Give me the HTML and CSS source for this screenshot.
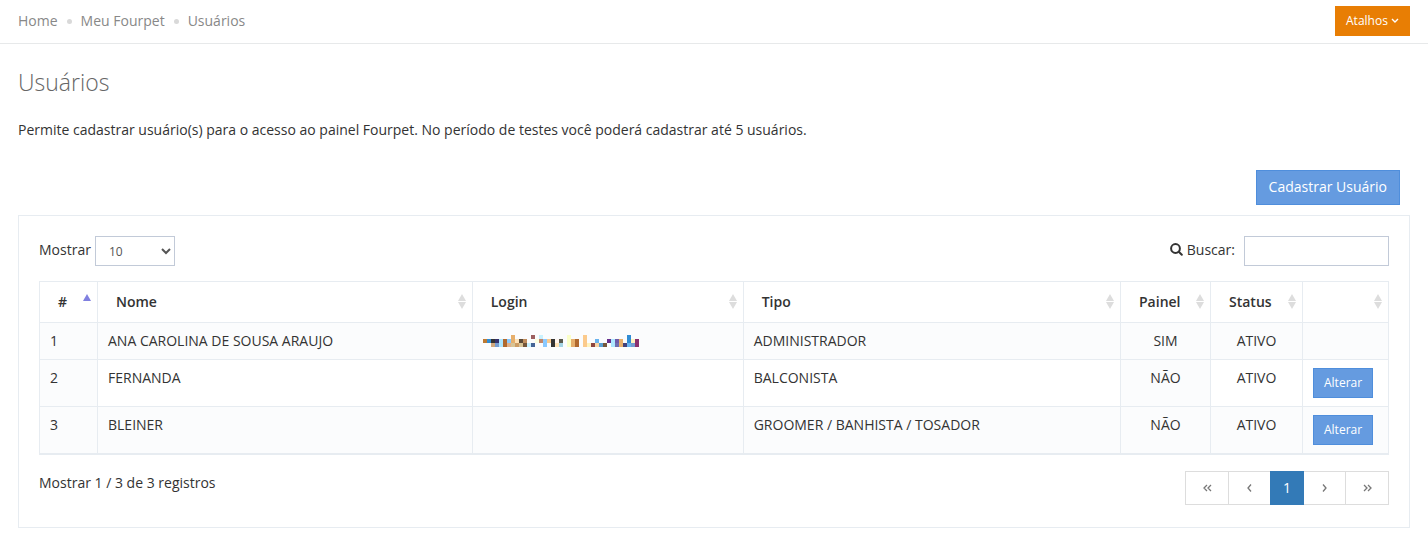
FILE: index.html
```html
<!DOCTYPE html>
<html lang="pt-BR">

<head>
    <meta charset="UTF-8" />
    <meta name="viewport" content="width=device-width, initial-scale=1.0" />
    <title>Usuários</title>
    <link rel="stylesheet" href="styles.css">
</head>

<body>
    <header class="page-bar">
        <nav class="breadcrumb">
            <a href="#">Home</a>
            <i class="dot"></i>
            <a href="#">Meu Fourpet</a>
            <i class="dot"></i>
            <span>Usuários</span>
        </nav>
        <button type="button" class="btn btn-sm btn-orange">Atalhos
            <svg class="caret" width="8" height="6" viewBox="0 0 8 6"><path d="M1 1l3 3 3-3" /></svg>
        </button>
    </header>

    <main class="page-content">
        <h1 class="page-title">Usuários</h1>
        <p class="intro">Permite cadastrar usuário(s) para o acesso ao painel Fourpet. No período de testes você poderá cadastrar até 5 usuários.</p>

        <div class="actions">
            <button type="button" class="btn btn-blue">Cadastrar Usuário</button>
        </div>

        <section class="portlet">
            <div class="toolbar">
                <div class="length">
                    <label for="length">Mostrar</label>
                    <select id="length">
                        <option>10</option>
                        <option>25</option>
                        <option>50</option>
                    </select>
                </div>
                <div class="filter">
                    <label for="search">
                        <svg class="search-icon" width="13" height="13" viewBox="0 0 13 13"><circle cx="5.5" cy="5.5" r="4.4" /><path d="M8.8 8.8l3 3" /></svg>
                        Buscar:</label>
                    <input type="text" id="search" />
                </div>
            </div>

            <table class="users">
                <colgroup>
                    <col class="col-id" />
                    <col class="col-nome" />
                    <col class="col-login" />
                    <col />
                    <col class="col-painel" />
                    <col class="col-status" />
                    <col class="col-acao" />
                </colgroup>
                <thead>
                    <tr>
                        <th class="asc">#</th>
                        <th>Nome</th>
                        <th>Login</th>
                        <th>Tipo</th>
                        <th>Painel</th>
                        <th>Status</th>
                        <th></th>
                    </tr>
                </thead>
                <tbody>
                    <tr>
                        <td class="sorted">1</td>
                        <td>ANA CAROLINA DE SOUSA ARAUJO</td>
                        <td>
                            <svg class="masked" width="156" height="12" viewBox="0 0 39 3" shape-rendering="crispEdges">
                                <path fill="#e6af6c" d="M7 0h1v2h-1zM22 1h1v2h-1zM34 1h1v2h-1z" />
                                <path fill="#9c5f5f" d="M12 0h1v1h-1z" />
                                <path fill="#c9f1ff" d="M14 0h1v1h-1zM11 2h1v1h-1z" />
                                <path fill="#fbffc9" d="M21 0h1v3h-1z" />
                                <path fill="#fbca8c" d="M25 0h1v3h-1zM16 1h1v1h-1z" />
                                <path fill="#318dd4" d="M36 0h1v2h-1zM1 1h1v1h-1z" />
                                <path fill="#bd7a33" d="M0 1h1v1h-1z" />
                                <path fill="#333333" d="M2 1h1v1h-1zM17 1h1v2h-1z" />
                                <path fill="#35316b" d="M3 1h1v1h-1z" />
                                <path fill="#ade6ff" d="M4 1h1v2h-1zM32 1h1v2h-1z" />
                                <path fill="#b0692f" d="M5 1h1v2h-1zM23 1h1v2h-1z" />
                                <path fill="#8ac9ff" d="M6 1h1v1h-1zM15 1h1v2h-1z" />
                                <path fill="#ffe3b8" d="M8 1h1v1h-1zM18 2h1v1h-1z" />
                                <path fill="#5a4a38" d="M9 1h1v1h-1z" />
                                <path fill="#c08d5d" d="M10 1h1v1h-1z" />
                                <path fill="#fcffe0" d="M13 1h1v1h-1z" />
                                <path fill="#c2876c" d="M14 1h1v1h-1z" />
                                <path fill="#fff5ee" d="M18 1h1v1h-1z" />
                                <path fill="#5b5b4e" d="M19 1h1v1h-1z" />
                                <path fill="#69b3ee" d="M28 1h1v1h-1zM36 2h1v1h-1z" />
                                <path fill="#68308e" d="M31 1h1v1h-1z" />
                                <path fill="#6f5aa8" d="M33 1h1v1h-1z" />
                                <path fill="#fff3c0" d="M37 1h1v1h-1zM26 2h1v1h-1z" />
                                <path fill="#8a306f" d="M38 1h1v2h-1z" />
                                <path fill="#d0a87c" d="M2 2h1v1h-1z" />
                                <path fill="#769dd0" d="M3 2h1v1h-1zM37 2h1v1h-1z" />
                                <path fill="#e0b18a" d="M6 2h1v1h-1z" />
                                <path fill="#d8c495" d="M7 2h1v1h-1zM9 2h1v1h-1z" />
                                <path fill="#cc9c64" d="M8 2h1v1h-1z" />
                                <path fill="#74573c" d="M10 2h1v1h-1zM30 2h1v1h-1z" />
                                <path fill="#456596" d="M12 2h1v1h-1z" />
                                <path fill="#a4d4e4" d="M19 2h1v1h-1z" />
                                <path fill="#8c4440" d="M27 2h1v1h-1z" />
                                <path fill="#f7d4a6" d="M28 2h1v1h-1z" />
                                <path fill="#5aa0d4" d="M29 2h1v1h-1z" />
                                <path fill="#6f6cb0" d="M33 2h1v1h-1z" />
                                <path fill="#41417c" d="M35 2h1v1h-1z" />
                            </svg>
                        </td>
                        <td>ADMINISTRADOR</td>
                        <td class="center sorted">SIM</td>
                        <td class="center">ATIVO</td>
                        <td></td>
                    </tr>
                    <tr>
                        <td class="sorted">2</td>
                        <td>FERNANDA</td>
                        <td></td>
                        <td>BALCONISTA</td>
                        <td class="center sorted">NÃO</td>
                        <td class="center">ATIVO</td>
                        <td><button type="button" class="btn btn-sm btn-blue">Alterar</button></td>
                    </tr>
                    <tr>
                        <td class="sorted">3</td>
                        <td>BLEINER</td>
                        <td></td>
                        <td>GROOMER / BANHISTA / TOSADOR</td>
                        <td class="center sorted">NÃO</td>
                        <td class="center">ATIVO</td>
                        <td><button type="button" class="btn btn-sm btn-blue">Alterar</button></td>
                    </tr>
                </tbody>
            </table>

            <div class="table-footer">
                <div class="info">Mostrar 1 / 3 de 3 registros</div>
                <nav class="pagination">
                    <a href="#" aria-label="Primeira"><svg width="9" height="8" viewBox="0 0 9 8"><path d="M4 1L1 4l3 3M8 1L5 4l3 3" /></svg></a>
                    <a href="#" aria-label="Anterior"><svg width="9" height="8" viewBox="0 0 9 8"><path d="M6 .5L3 4l3 3.5" /></svg></a>
                    <a href="#" class="active">1</a>
                    <a href="#" aria-label="Próxima"><svg width="9" height="8" viewBox="0 0 9 8"><path d="M3 .5L6 4 3 7.5" /></svg></a>
                    <a href="#" aria-label="Última"><svg width="9" height="8" viewBox="0 0 9 8"><path d="M1 1l3 3-3 3M5 1l3 3-3 3" /></svg></a>
                </nav>
            </div>
        </section>
    </main>
</body>

</html>
```
FILE: styles.css
```css
* {
    box-sizing: border-box;
}

body {
    margin: 0;
    background: #fff;
    color: #333;
    font-family: "Open Sans", sans-serif;
    font-size: 14px;
    line-height: 20px;
}

a {
    text-decoration: none;
}

.page-bar {
    display: flex;
    justify-content: space-between;
    align-items: center;
    padding: 6px 18px 7px;
    border-bottom: 1px solid #e7e9ea;
}

.breadcrumb {
    display: flex;
    align-items: center;
    gap: 9px;
    color: #888;
}

.breadcrumb a {
    color: #888;
}

.dot {
    width: 5px;
    height: 5px;
    border-radius: 50%;
    background: #d9d9d9;
}

.btn {
    height: 35px;
    padding: 0 12px 2px;
    border: 1px solid;
    color: #fff;
    font-family: inherit;
    font-size: 14px;
    line-height: 18px;
    cursor: pointer;
}

.btn-sm {
    display: block;
    height: 30px;
    padding: 0 10px;
    font-size: 12px;
}

.btn-blue {
    background: #659be0;
    border-color: #4f8edc;
}

.btn-orange {
    background: #e87e04;
    border-color: #e87e04;
}

.caret {
    vertical-align: 1px;
    fill: none;
    stroke: #fff;
    stroke-width: 1.4;
}

.page-content {
    padding: 22px 18px 20px;
}

.page-title {
    margin: 0 0 22px;
    color: #666;
    font-size: 23px;
    font-weight: 300;
    line-height: 32px;
}

.intro {
    margin: 0 0 30px;
}

.actions {
    display: flex;
    justify-content: flex-end;
    padding-right: 10px;
    margin-bottom: 10px;
}

.portlet {
    padding: 20px 20px 22px;
    border: 1px solid #e7ecf1;
}

.toolbar {
    display: flex;
    justify-content: space-between;
    margin-bottom: 15px;
}

.length,
.filter {
    display: flex;
    gap: 4px;
    line-height: 28px;
}

.filter {
    gap: 9px;
}

.toolbar select,
.toolbar input {
    width: 80px;
    height: 30px;
    padding: 5px 9px;
    border: 1px solid #c2cad8;
    border-radius: 0;
    background: #fff;
    color: #555;
    font-family: inherit;
    font-size: 12px;
}

.toolbar input {
    width: 145px;
}

.search-icon {
    vertical-align: -1px;
    fill: none;
    stroke: #333;
    stroke-width: 2;
    stroke-linecap: round;
}

.users {
    width: 100%;
    table-layout: fixed;
    border: 1px solid #e7ecf1;
    border-collapse: separate;
    border-spacing: 0;
}

.col-id {
    width: 58px;
}

.col-nome {
    width: 27.8%;
}

.col-login {
    width: 20.1%;
}

.col-painel {
    width: 90px;
}

.col-status {
    width: 92px;
}

.col-acao {
    width: 85px;
}

th,
td {
    border-right: 1px solid #e7ecf1;
    border-bottom: 1px solid #e7ecf1;
}

th:last-child,
td:last-child {
    border-right: 0;
}

th {
    position: relative;
    height: 41px;
    padding: 10px 18px;
    font-weight: 600;
    text-align: left;
}

/* sort arrows */
th::before,
th::after {
    content: "";
    position: absolute;
    right: 6px;
    border: 4px solid transparent;
}

th::before {
    top: 12px;
    border-top: 0;
    border-bottom: 7px solid #ddd;
}

th::after {
    top: 20px;
    border-bottom: 0;
    border-top: 7px solid #ddd;
}

th.asc::before {
    border-bottom-color: #8080e0;
}

th.asc::after {
    display: none;
}

td {
    padding: 8px 10px;
    vertical-align: top;
}

tbody tr:nth-child(odd),
td.sorted {
    background: #fbfcfd;
}

.center {
    text-align: center;
}

.masked {
    display: block;
    margin-top: 4px;
}

.table-footer {
    display: flex;
    justify-content: space-between;
    align-items: flex-start;
    margin-top: 16px;
}

.info {
    padding-top: 2px;
}

.pagination {
    display: flex;
}

.pagination a {
    display: flex;
    justify-content: center;
    align-items: center;
    width: 43px;
    height: 34px;
    border: 1px solid #ddd;
    color: #777;
}

.pagination a:first-child,
.pagination a:last-child {
    width: 44px;
}

.pagination a + a {
    margin-left: -1px;
}

.pagination .active {
    z-index: 1;
    width: 34px;
    border-color: #337ab7;
    background: #337ab7;
    color: #fff;
}

.pagination svg {
    fill: none;
    stroke: #777;
    stroke-width: 1.3;
}
```
